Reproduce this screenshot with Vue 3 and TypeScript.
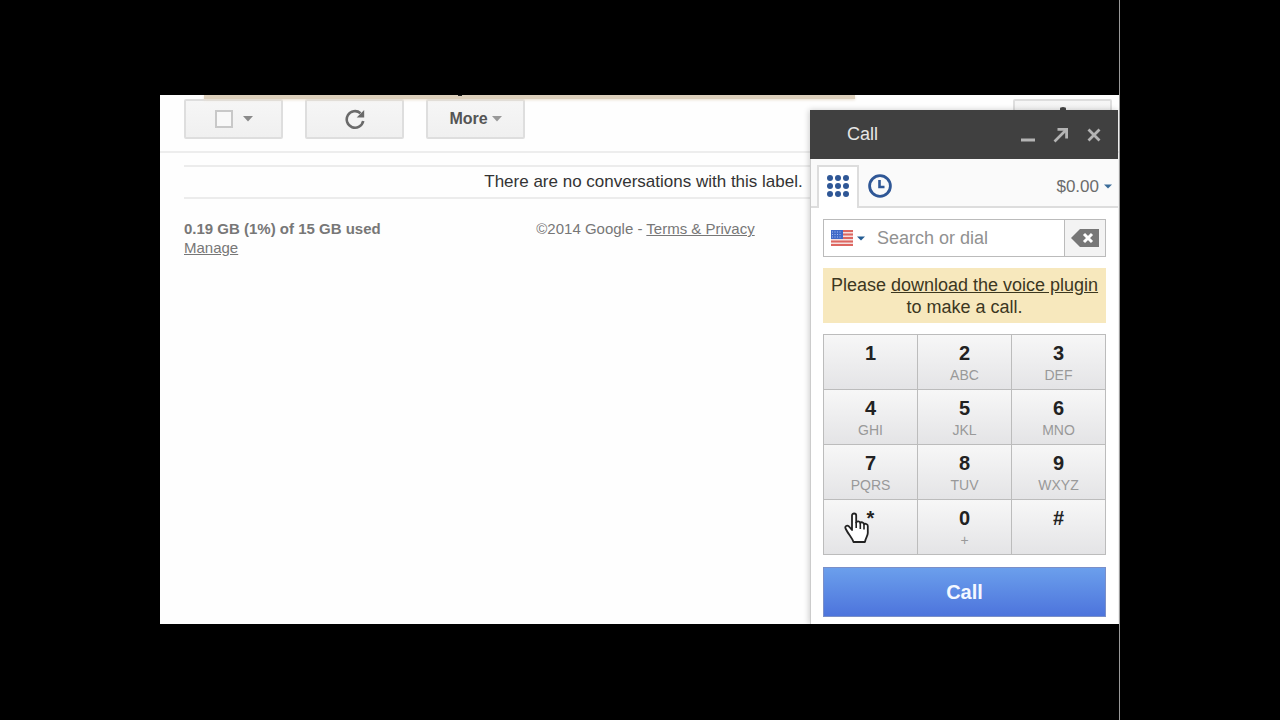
<script setup lang="ts">
import { ref } from 'vue'

interface Key {
  digit: string
  letters: string
}

const query = ref('')
const country = ref('US')
const allChecked = ref(false)

const keys: Key[] = [
  { digit: '1', letters: '' },
  { digit: '2', letters: 'ABC' },
  { digit: '3', letters: 'DEF' },
  { digit: '4', letters: 'GHI' },
  { digit: '5', letters: 'JKL' },
  { digit: '6', letters: 'MNO' },
  { digit: '7', letters: 'PQRS' },
  { digit: '8', letters: 'TUV' },
  { digit: '9', letters: 'WXYZ' },
  { digit: '*', letters: '' },
  { digit: '0', letters: '+' },
  { digit: '#', letters: '' },
]

function press(key: Key): void {
  query.value += key.digit
}

function erase(): void {
  query.value = query.value.slice(0, -1)
}
</script>

<template>
  <div class="screen">
    <div class="column">
      <main class="mail">
        <div class="notice-edge"></div>

        <div class="toolbar">
          <div class="tool">
            <input v-model="allChecked" class="check" type="checkbox" aria-label="Select all" />
            <button class="bare" type="button" aria-label="Select options">
              <svg width="10" height="6" viewBox="0 0 10 6"><path d="M0 0h10L5 5.5z" fill="#8a8a8a" /></svg>
            </button>
          </div>
          <button class="tool" type="button" aria-label="Refresh">
            <svg width="22" height="22" viewBox="0 0 22 22">
              <path d="M16.500 5.200A8.300 8.300 0 1 0 19.200 13" fill="none" stroke="#6a6a6a" stroke-width="2.600" />
              <path d="M20.200 2v7.500h-7.500z" fill="#6a6a6a" />
            </svg>
          </button>
          <button class="tool more" type="button">
            More
            <svg width="10" height="6" viewBox="0 0 10 6"><path d="M0 0h10L5 5.5z" fill="#999" /></svg>
          </button>
          <button class="tool settings" type="button" aria-label="Settings">
            <svg width="22" height="22" viewBox="0 0 22 22">
              <path d="M8 4V1.500Q8 0 11 0t3 1.500V4z" fill="#444" />
              <circle cx="11" cy="11" r="6" fill="none" stroke="#555" stroke-width="3" />
            </svg>
          </button>
        </div>

        <p class="empty">There are no conversations with this label.</p>

        <footer class="foot">
          <div class="storage">
            <strong>0.19 GB (1%) of 15 GB used</strong>
            <a href="#manage">Manage</a>
          </div>
          <div class="legal">©2014 Google - <a href="#terms">Terms &amp; Privacy</a></div>
        </footer>

        <section class="dialer" aria-label="Call">
          <header class="title">
            <h1>Call</h1>
            <button class="bare" type="button" aria-label="Minimize">
              <svg width="16" height="16" viewBox="0 0 16 16"><path d="M1 13h14" stroke="#b4b4b4" stroke-width="3" /></svg>
            </button>
            <button class="bare" type="button" aria-label="Pop out">
              <svg width="16" height="16" viewBox="0 0 16 16">
                <path d="M1.500 14.500L12 4" stroke="#b4b4b4" stroke-width="2.600" />
                <path d="M4.500 1H15v10.500h-2.800V5.500L10.500 3.800H4.500z" fill="#b4b4b4" />
              </svg>
            </button>
            <button class="bare" type="button" aria-label="Close">
              <svg width="16" height="16" viewBox="0 0 16 16">
                <path d="M2.500 2.500l11 11M13.500 2.500l-11 11" stroke="#b4b4b4" stroke-width="2.800" />
              </svg>
            </button>
          </header>

          <nav class="tabs">
            <button class="tab active" type="button" aria-label="Keypad">
              <svg width="24" height="24" viewBox="0 0 24 24" fill="#2f5796">
                <circle cx="4" cy="4" r="3" /><circle cx="12" cy="4" r="3" /><circle cx="20" cy="4" r="3" />
                <circle cx="4" cy="12" r="3" /><circle cx="12" cy="12" r="3" /><circle cx="20" cy="12" r="3" />
                <circle cx="4" cy="20" r="3" /><circle cx="12" cy="20" r="3" /><circle cx="20" cy="20" r="3" />
              </svg>
            </button>
            <button class="tab" type="button" aria-label="History">
              <svg width="24" height="24" viewBox="0 0 24 24" fill="none" stroke="#2f5796">
                <circle cx="12" cy="12" r="10.400" stroke-width="2.800" />
                <path d="M11.500 6v7h5" stroke-width="2.600" />
              </svg>
            </button>
            <button class="credit" type="button">
              $0.00
              <svg width="8" height="5" viewBox="0 0 8 5"><path d="M0 .5h8L4 4.500z" fill="#3b6c99" /></svg>
            </button>
          </nav>

          <div class="body">
            <div class="search">
              <div class="flag">
                <svg width="22" height="16" viewBox="0 0 22 16">
                  <path d="M0 0h22v16H0z" fill="#f4dfdf" />
                  <path d="M0 1h22M0 4.500h22M0 8h22M0 11.500h22M0 15h22" stroke="#dd6660" stroke-width="2" />
                  <path d="M0 0h12v9H0z" fill="#4169c8" />
                  <path d="M1 2h10M1 4.500h10M1 7h10" stroke="#a9bdf0" stroke-dasharray="1 1.500" />
                </svg>
                <svg width="8" height="5" viewBox="0 0 8 5"><path d="M0 .5h8L4 4.500z" fill="#245c93" /></svg>
                <select v-model="country" aria-label="Country">
                  <option value="US">United States</option>
                </select>
              </div>
              <input v-model="query" class="field" type="text" placeholder="Search or dial" aria-label="Search or dial" />
              <button class="erase" type="button" aria-label="Erase" @click="erase">
                <svg width="28" height="18" viewBox="0 0 28 18">
                  <path d="M0 9L9 0h19v18H9z" fill="#777" />
                  <path d="M13 5l8 8M21 5l-8 8" stroke="#fff" stroke-width="3" />
                </svg>
              </button>
            </div>

            <p class="plugin">Please <a href="#plugin">download the voice plugin</a><br />to make a call.</p>

            <div class="pad">
              <button v-for="key in keys" :key="key.digit" class="key" type="button" @click="press(key)">
                <b>{{ key.digit }}</b>
                <span>{{ key.letters }}</span>
              </button>
              <svg class="pointer" width="26" height="32" viewBox="0 0 26 32">
                <path
                  d="M8 18V3.500C8 .800 12.200 .800 12.200 3.500V10.500C12.800 8.800 16 9 16.300 11C17 9.700 19.800 10.200 20 12.300C21 11.200 23.800 12 23.800 14V21C23.800 24 21.500 26 21 30H9.500C8.500 26.500 4.500 22.500 1.800 17C.200 13.800 3.200 12.800 5 14.500Z"
                  fill="#fff" stroke="#222" stroke-width="1.800" stroke-linejoin="round" />
                <path d="M12.200 10v6M16.300 11v6M20 12.500v5" stroke="#222" stroke-width="1.600" />
              </svg>
            </div>

            <button class="call" type="button">Call</button>
          </div>
        </section>
      </main>
    </div>
  </div>
</template>

<style>
body {
  background: #000;
}
</style>

<style scoped>
* {
  box-sizing: border-box;
}

.screen {
  min-height: 100vh;
  padding: 0 12.5%;
  display: flex;
  background: #000;
  font-family: "Liberation Sans", Arial, sans-serif;
  color: #333;
}

.column {
  flex: 1;
  display: flex;
  padding: 95px 0 96px;
  border-right: 1px solid #999;
}

.mail {
  position: relative;
  flex: 1;
  overflow: hidden;
  background: #fefefe;
}

button {
  font-family: inherit;
  cursor: pointer;
}

svg {
  display: block;
  flex: none;
}

.bare {
  padding: 0;
  border: 0;
  background: none;
}

.notice-edge {
  position: relative;
  height: 4px;
  margin: 0 264px 0 44px;
  background: #dccfbb;
  box-shadow: 0 1px 3px #eadfd0;
}

/* Tail of a letter from the line that is scrolled out above. */
.notice-edge::after {
  content: "";
  position: absolute;
  top: 0;
  left: 39%;
  width: 4px;
  height: 1px;
  background: #222;
}

.toolbar {
  display: flex;
  gap: 22px;
  height: 54px;
  padding: 0 7px 0 24px;
  border-bottom: 2px solid #ededed;
}

.tool {
  display: flex;
  align-items: center;
  justify-content: center;
  gap: 10px;
  width: 99px;
  height: 40px;
  padding: 0;
  border: 2px solid #dedede;
  border-radius: 2px;
  background: linear-gradient(#f6f6f6, #f0f0f0);
}

.check {
  appearance: none;
  width: 18px;
  height: 18px;
  margin: 0;
  border: 2px solid #c8c8c8;
  background: #f8f8f8;
}

.more {
  gap: 4px;
  font-size: 16px;
  font-weight: bold;
  color: #555;
}

.settings {
  align-items: flex-start;
  padding-top: 6px;
  margin-left: auto;
}

.empty {
  margin: 12px 16px 0 24px;
  border: solid #ececec;
  border-width: 2px 0;
  font-size: 17px;
  line-height: 30px;
  text-align: center;
  color: #333;
}

.foot {
  display: grid;
  grid-template-columns: 1fr auto 1fr;
  margin: 20px 12px 0 24px;
  font-size: 15px;
  line-height: 19px;
  color: #777;
}

.foot a {
  color: inherit;
}

.storage {
  display: flex;
  flex-direction: column;
  align-items: flex-start;
}

.dialer {
  position: absolute;
  top: 15px;
  right: 1px;
  bottom: 0;
  width: 308px;
  border-left: 1px solid #ccc;
  background: #fff;
  box-shadow: -1px 0 6px rgba(0, 0, 0, 0.2);
}

.title {
  display: flex;
  align-items: center;
  gap: 17px;
  height: 49px;
  margin-left: -1px;
  padding: 0 16px 0 37px;
  background: #404040;
}

.title h1 {
  flex: 1;
  margin: 0;
  font-size: 18px;
  font-weight: normal;
  color: #e6e6e6;
}

.tabs {
  display: flex;
  align-items: flex-end;
  height: 49px;
  padding: 0 6px;
  border-bottom: 2px solid #ddd;
  background: #fafafa;
}

.tab {
  display: flex;
  align-items: center;
  justify-content: center;
  width: 42px;
  height: 41px;
  padding: 0;
  border: 0;
  background: none;
}

.active {
  height: 43px;
  margin-bottom: -2px;
  padding-bottom: 4px;
  border: 2px solid #ddd;
  border-bottom: 0;
  background: #fff;
}

.credit {
  display: flex;
  align-items: center;
  gap: 5px;
  height: 39px;
  margin-left: auto;
  padding: 0;
  border: 0;
  background: none;
  font-size: 17px;
  color: #6c6c6c;
}

.body {
  padding: 11px 12px 8px;
}

.search {
  display: flex;
  height: 38px;
  border: 1px solid #bbb;
  background: #fff;
}

.flag {
  position: relative;
  display: flex;
  align-items: center;
  gap: 4px;
  padding: 0 8px 0 7px;
}

.flag select {
  position: absolute;
  inset: 0;
  width: 100%;
  opacity: 0;
}

.field {
  flex: 1;
  min-width: 0;
  padding: 0 4px;
  border: 0;
  outline: 0;
  background: none;
  font-family: inherit;
  font-size: 18px;
  color: #333;
}

.field::placeholder {
  color: #919191;
  opacity: 1;
}

.erase {
  display: flex;
  align-items: center;
  justify-content: center;
  width: 41px;
  padding: 0;
  border: 0;
  border-left: 1px solid #bbb;
  background: #f3f3f3;
}

.plugin {
  margin: 11px 0;
  padding: 6px 0 5px;
  background: #f7e8bd;
  font-size: 18px;
  line-height: 22px;
  text-align: center;
  white-space: nowrap;
  color: #3c371f;
}

.plugin a {
  color: inherit;
}

.pad {
  position: relative;
  display: grid;
  grid-template-columns: repeat(3, 1fr);
  gap: 1px;
  border: 1px solid #bcbcbc;
  background: #bcbcbc;
}

.key {
  display: flex;
  flex-direction: column;
  align-items: center;
  height: 54px;
  padding: 6px 0 0;
  border: 0;
  background: linear-gradient(#f7f7f7, #e4e4e6);
}

.key b {
  font-size: 20px;
  line-height: 24px;
  color: #222;
}

.key span {
  font-size: 14px;
  line-height: 21px;
  color: #999;
}

.pointer {
  position: absolute;
  bottom: 10px;
  left: 20px;
  pointer-events: none;
}

.call {
  display: block;
  width: 100%;
  height: 50px;
  margin-top: 12px;
  padding: 0;
  border: 1px solid #7a8fc8;
  background: linear-gradient(#6b9fec, #4d74dc);
  font-size: 20px;
  font-weight: bold;
  color: #f4f8ff;
}
</style>
